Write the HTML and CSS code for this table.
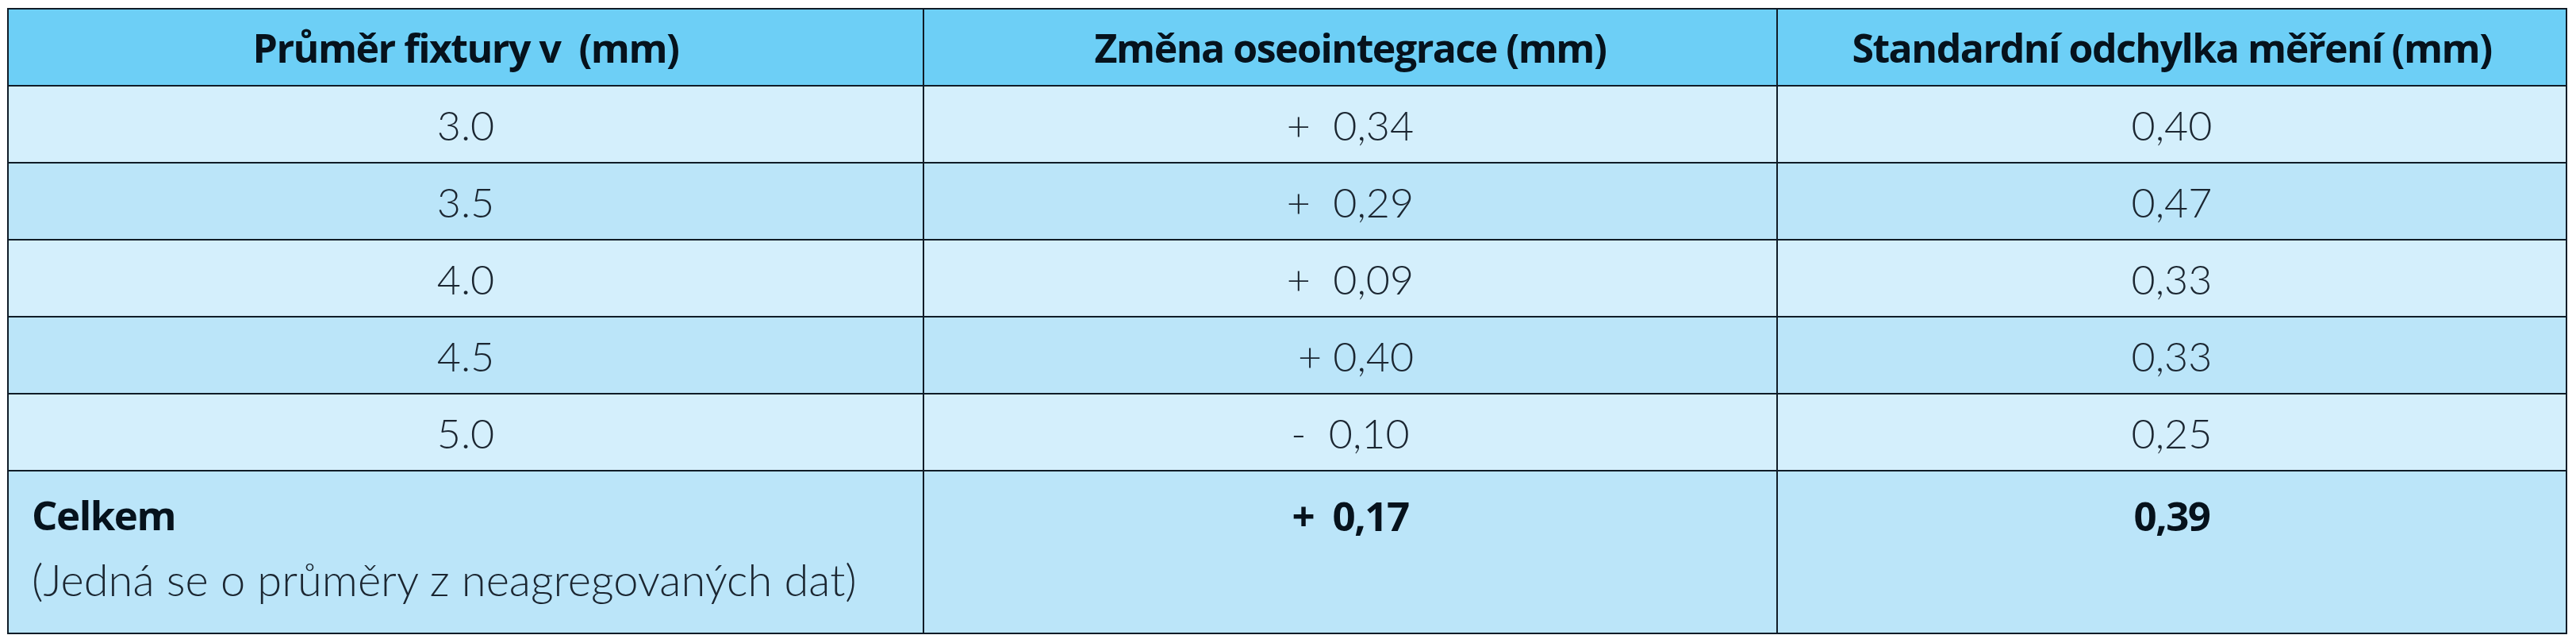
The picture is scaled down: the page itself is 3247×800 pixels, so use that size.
FILE: index.html
```html
<!DOCTYPE html>
<html lang="cs">
<head>
<meta charset="utf-8">
<title>Tabulka</title>
<link rel="stylesheet" href="styles.css">
</head>
<body>
<table class="data">
  <colgroup>
    <col class="c1">
    <col class="c2">
    <col class="c3">
  </colgroup>
  <thead>
    <tr class="head">
      <th>Průměr fixtury v&nbsp; (mm)</th>
      <th>Změna oseointegrace (mm)</th>
      <th>Standardní odchylka měření (mm)</th>
    </tr>
  </thead>
  <tbody>
    <tr class="light"><td>3.0</td><td class="pre">+  0,34</td><td>0,40</td></tr>
    <tr class="dark"><td>3.5</td><td class="pre">+  0,29</td><td>0,47</td></tr>
    <tr class="light"><td>4.0</td><td class="pre">+  0,09</td><td>0,33</td></tr>
    <tr class="dark"><td>4.5</td><td class="pre"> + 0,40</td><td>0,33</td></tr>
    <tr class="light"><td>5.0</td><td class="pre">-  0,10</td><td>0,25</td></tr>
    <tr class="total">
      <td class="label">
        <div class="strong">Celkem</div>
        <div class="note">(Jedná se o průměry z neagregovaných dat)</div>
      </td>
      <td class="pre"><span class="strong">+  0,17</span></td>
      <td><span class="strong">0,39</span></td>
    </tr>
  </tbody>
</table>
</body>
</html>
```
FILE: styles.css
```css
html, body {
  margin: 0;
  padding: 0;
  background: #ffffff;
}

body {
  padding: 10px 0 0 9px;
  font-family: "Open Sans", "Noto Sans", "DejaVu Sans", sans-serif;
  color: #13202b;
}

.data {
  border-collapse: collapse;
  table-layout: fixed;
  width: 3225px;
}

.c1 { width: 1154px; }
.c2 { width: 1076px; }
.c3 { width: 995px; }

.data th,
.data td {
  border: 2px solid #101c27;
  text-align: center;
  vertical-align: middle;
  padding: 0;
}

.head th {
  height: 95px;
  background: #6dcff6;
  font-family: "Open Sans", "Noto Sans", sans-serif;
  font-weight: 700;
  font-size: 50px;
  color: #06121c;
  letter-spacing: -1.5px;
}

.light td,
.dark td {
  height: 95px;
  font-family: Lato, "Open Sans", sans-serif;
  font-weight: 300;
  font-size: 52px;
  color: #1b2631;
}

.light td { background: #d4effc; }
.dark td { background: #bbe5f9; }

.pre { white-space: pre; }

.total td {
  height: 181px;
  background: #bbe5f9;
  vertical-align: top;
  padding-top: 22px;
  font-size: 50px;
}

.total td.label {
  text-align: left;
  padding-left: 29px;
}

.strong {
  font-family: "Open Sans", sans-serif;
  font-weight: 700;
  color: #06121c;
  letter-spacing: -1.5px;
  line-height: 64px;
}

.total td .strong { font-size: 51px; }

.note {
  margin-top: 20px;
  font-family: Lato, "Open Sans", sans-serif;
  font-weight: 300;
  font-size: 56px;
  line-height: 60px;
  color: #1b2631;
}
```
